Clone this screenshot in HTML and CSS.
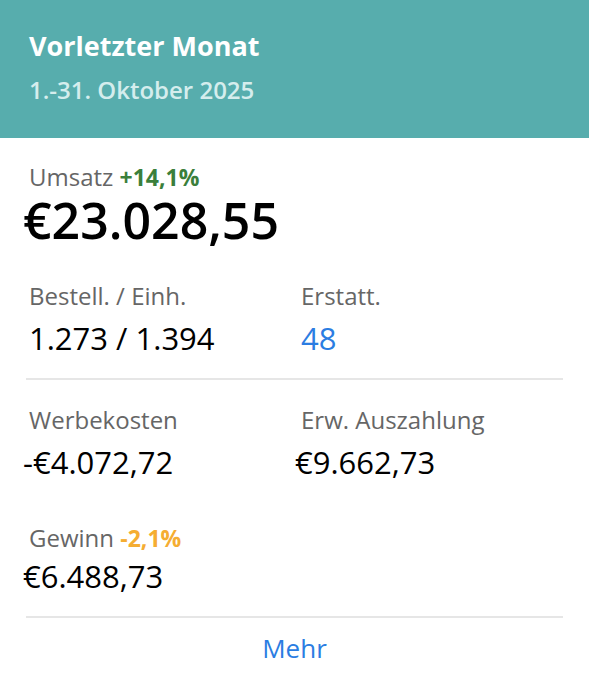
FILE: index.html
```html
<!DOCTYPE html>
<html lang="de">
<head>
  <meta charset="utf-8">
  <title>Vorletzter Monat</title>
  <link rel="stylesheet" href="styles.css">
</head>
<body>
  <div class="card">
    <!-- header -->
    <div class="card-head">
      <div class="head-title">Vorletzter Monat</div>
      <div class="head-sub">1.-31. Oktober 2025</div>
    </div>

    <div class="card-body">
      <div class="metric">
        <div class="label">Umsatz <span class="delta up">+14,1%</span></div>
        <div class="value big money">€23.028,55</div>
      </div>

      <div class="pair">
        <div class="metric">
          <div class="label">Bestell. / Einh.</div>
          <div class="value">1.273 / 1.394</div>
        </div>
        <div class="metric">
          <div class="label">Erstatt.</div>
          <div class="value link">48</div>
        </div>
      </div>

      <hr class="divider">

      <div class="pair second">
        <div class="metric">
          <div class="label">Werbekosten</div>
          <div class="value money">-€4.072,72</div>
        </div>
        <div class="metric">
          <div class="label">Erw. Auszahlung</div>
          <div class="value money">€9.662,73</div>
        </div>
      </div>

      <div class="metric profit">
        <div class="label">Gewinn <span class="delta down">-2,1%</span></div>
        <div class="value money">€6.488,73</div>
      </div>

      <hr class="divider">

      <div class="more">Mehr</div>
    </div>
  </div>
</body>
</html>
```

FILE: styles.css
```css
body {
  margin: 0;
  font-family: "Open Sans", sans-serif;
  background: #fff;
}
.card {
  width: 589px;
}
.card-head {
  background: #57adad;
  height: 138px;
  padding: 28px 29px 0;
  box-sizing: border-box;
}
.head-title {
  color: #fff;
  font-size: 27px;
  font-weight: 700;
  line-height: 36px;
}
.head-sub {
  color: #d5eded;
  font-size: 24px;
  font-weight: 600;
  line-height: 32px;
  margin-top: 10px;
}
.card-body {
  padding: 24px 26px 0;
}
.metric {
  padding-left: 3px;
}
.label {
  color: #666;
  font-size: 24px;
  line-height: 30px;
}
.delta {
  font-size: 23px;
  font-weight: 700;
}
.delta.up {
  color: #3b7f3b;
}
.delta.down {
  color: #f5ad32;
}
.value {
  color: #000;
  font-size: 31px;
  line-height: 40px;
  margin-top: 7px;
}
.value.big {
  font-size: 50px;
  font-weight: 600;
  line-height: 56px;
  margin-top: 0;
}
.money {
  margin-left: -6px;
}
.value.link {
  color: #2b7de2;
}
.pair {
  display: grid;
  grid-template-columns: 272px 1fr;
  margin-top: 33px;
}
.pair.second {
  margin-top: 25px;
}
.divider {
  border: 0;
  border-top: 2px solid #e6e6e6;
  margin: 20px 0 0;
}
.profit {
  margin-top: 41px;
}
.profit .value {
  margin-top: 3px;
}
.more {
  text-align: center;
  color: #2b7de2;
  font-size: 26px;
  line-height: 60px;
}
```
